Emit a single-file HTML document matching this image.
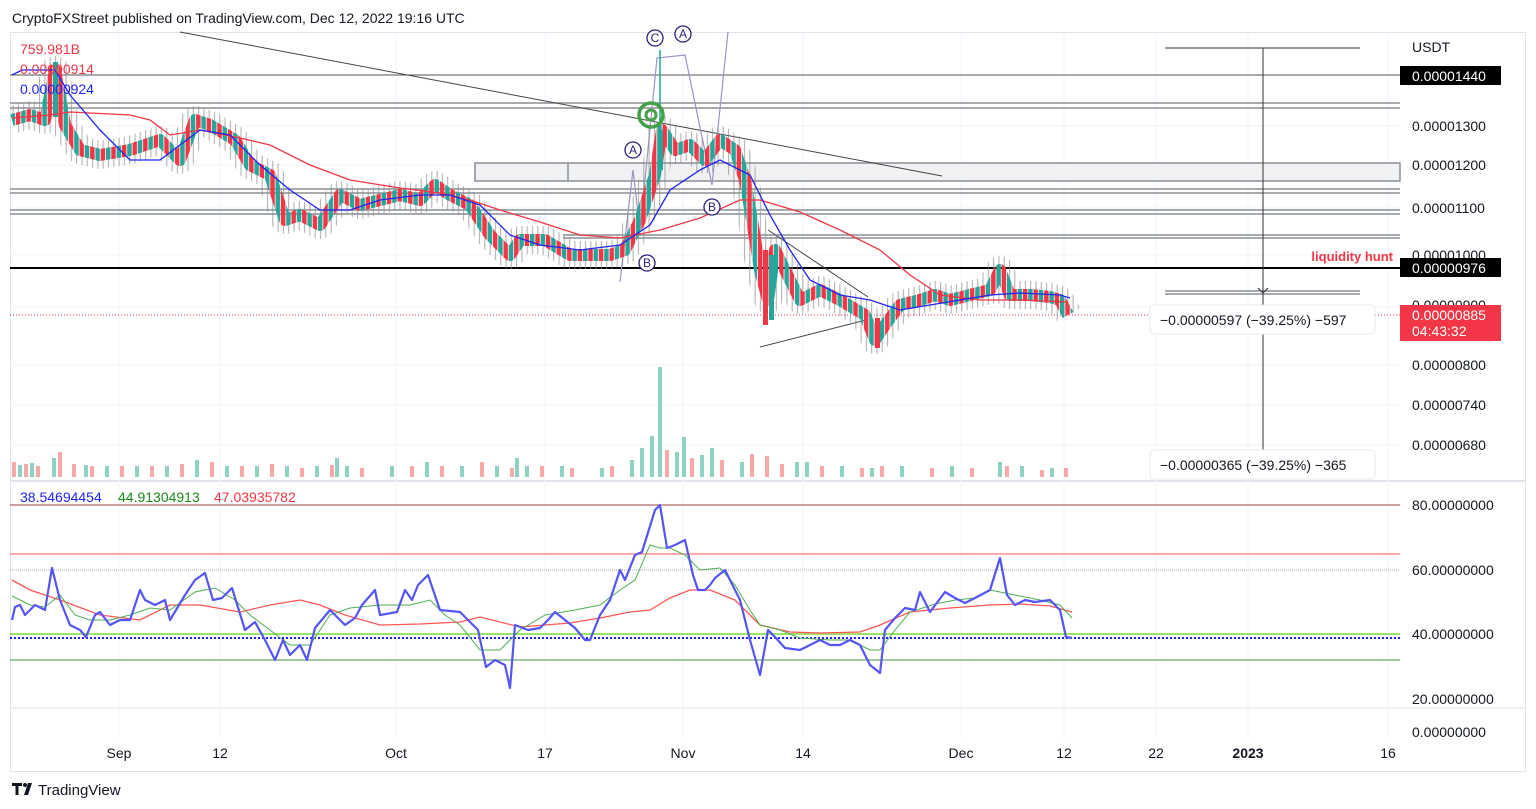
<!DOCTYPE html>
<html><head><meta charset="utf-8"><style>
html,body{margin:0;padding:0;background:#fff;width:1536px;height:809px;overflow:hidden;font-family:"Liberation Sans",sans-serif}
svg text{font-family:"Liberation Sans",sans-serif}
</style></head><body>
<svg width="1536" height="809" viewBox="0 0 1536 809" xmlns="http://www.w3.org/2000/svg">
<defs>
<pattern id="cd" x="0" y="0" width="10.6" height="40" patternUnits="userSpaceOnUse">
<rect x="0" y="0" width="4.5" height="40" fill="#26a69a"/>
<rect x="5.3" y="0" width="4.5" height="40" fill="#f23645"/>
</pattern>
<pattern id="wk" x="0" y="0" width="5.3" height="40" patternUnits="userSpaceOnUse">
<rect x="2" y="0" width="1" height="40" fill="#888"/>
</pattern>
</defs>
<rect width="1536" height="809" fill="#fff"/>
<text x="12" y="23" font-size="14" fill="#131722">CryptoFXStreet published on TradingView.com, Dec 12, 2022 19:16 UTC</text>
<rect x="10.5" y="32.5" width="1515" height="739" fill="none" stroke="#e0e3eb"/>
<line x1="10" y1="481" x2="1526" y2="481" stroke="#e0e3eb" stroke-width="2"/>
<line x1="10" y1="708" x2="1526" y2="708" stroke="#e0e3eb"/>
<g stroke="#f0f3fa" stroke-width="1">
<line x1="119" y1="33" x2="119" y2="738"/><line x1="220" y1="33" x2="220" y2="738"/><line x1="396" y1="33" x2="396" y2="738"/><line x1="545" y1="33" x2="545" y2="738"/><line x1="683" y1="33" x2="683" y2="738"/><line x1="803" y1="33" x2="803" y2="738"/><line x1="961" y1="33" x2="961" y2="738"/><line x1="1064" y1="33" x2="1064" y2="738"/><line x1="1156" y1="33" x2="1156" y2="738"/><line x1="1248" y1="33" x2="1248" y2="738"/><line x1="1388" y1="33" x2="1388" y2="738"/>
<line x1="10" y1="126" x2="1400" y2="126"/><line x1="10" y1="165" x2="1400" y2="165"/><line x1="10" y1="208" x2="1400" y2="208"/><line x1="10" y1="255" x2="1400" y2="255"/><line x1="10" y1="307" x2="1400" y2="307"/><line x1="10" y1="365" x2="1400" y2="365"/><line x1="10" y1="405" x2="1400" y2="405"/><line x1="10" y1="445" x2="1400" y2="445"/>
</g>
<rect x="475" y="163" width="925" height="18" fill="#f0f1f3" stroke="#8a8e94" stroke-width="1.5"/>
<line x1="568" y1="163" x2="568" y2="181" stroke="#8a8e94" stroke-width="1.5"/>
<g stroke="#8a8e94" stroke-width="1.5">
<line x1="10" y1="103" x2="1400" y2="103"/><line x1="10" y1="108" x2="1400" y2="108"/>
<line x1="10" y1="189" x2="1400" y2="189"/><line x1="10" y1="193" x2="1400" y2="193"/>
<line x1="10" y1="210" x2="1400" y2="210"/><line x1="10" y1="214" x2="1400" y2="214"/>
<line x1="563" y1="235" x2="1400" y2="235"/><line x1="563" y1="238" x2="1400" y2="238"/>
<line x1="1165" y1="291" x2="1360" y2="291"/><line x1="1165" y1="294" x2="1360" y2="294"/>
</g>
<line x1="10" y1="75" x2="1400" y2="75" stroke="#555" stroke-width="1"/>
<line x1="10" y1="268" x2="1400" y2="268" stroke="#000" stroke-width="2"/>
<line x1="10" y1="315" x2="1400" y2="315" stroke="#f23645" stroke-width="1" stroke-dasharray="1,2"/>
<line x1="180" y1="32" x2="942" y2="176" stroke="#444" stroke-width="1"/>
<line x1="768" y1="230" x2="868" y2="297" stroke="#444"/>
<line x1="760" y1="347" x2="866" y2="320" stroke="#444"/>
<line x1="1165" y1="48" x2="1360" y2="48" stroke="#333"/>
<line x1="1263" y1="48" x2="1263" y2="450" stroke="#333"/>
<path d="M1258 288l5 5 5-5" fill="none" stroke="#333"/>
<polyline points="620,282 633,170 640,230 657,58 685,55 712,185 728,32" fill="none" stroke="#9a94c8" stroke-width="1.2"/>
<g fill="#f7a9a9">
<path d="M12 462h4v15h-4zM24 464h4v13h-4zM36 466h4v11h-4zM58 452h4v25h-4zM72 464h4v13h-4zM90 466h4v11h-4zM120 466h4v11h-4zM150 466h4v11h-4zM180 464h4v13h-4zM210 462h4v15h-4zM240 466h4v11h-4zM270 464h4v13h-4zM300 468h4v9h-4zM330 465h4v12h-4zM360 468h4v9h-4zM410 466h4v11h-4zM440 466h4v11h-4zM480 462h4v15h-4zM510 468h4v9h-4zM540 466h4v11h-4zM570 468h4v9h-4zM610 466h4v11h-4zM665 450h4v27h-4zM690 458h4v19h-4zM720 460h4v17h-4zM750 454h4v23h-4zM765 456h4v21h-4zM780 464h4v13h-4zM820 466h4v11h-4zM860 468h4v9h-4zM880 466h4v11h-4zM930 468h4v9h-4zM970 468h4v9h-4zM1005 466h4v11h-4zM1040 470h4v7h-4zM1064 468h4v9h-4z"/>
</g>
<g fill="#8fd1c2">
<path d="M18 465h4v12h-4zM30 463h4v14h-4zM52 458h4v19h-4zM84 465h4v12h-4zM105 466h4v11h-4zM135 466h4v11h-4zM165 466h4v11h-4zM195 460h4v17h-4zM225 466h4v11h-4zM255 466h4v11h-4zM285 466h4v11h-4zM315 466h4v11h-4zM335 458h4v19h-4zM345 466h4v11h-4zM390 466h4v11h-4zM425 462h4v15h-4zM460 466h4v11h-4zM495 466h4v11h-4zM515 458h4v19h-4zM525 466h4v11h-4zM560 466h4v11h-4zM600 468h4v9h-4zM630 460h4v17h-4zM640 448h4v29h-4zM650 436h4v41h-4zM658 367h4v110h-4zM675 452h4v25h-4zM682 437h4v40h-4zM700 455h4v22h-4zM710 448h4v29h-4zM740 462h4v15h-4zM795 462h4v15h-4zM805 462h4v15h-4zM840 466h4v11h-4zM870 468h4v9h-4zM900 466h4v11h-4zM950 466h4v11h-4zM998 462h4v15h-4zM1020 466h4v11h-4zM1050 468h4v9h-4z"/>
</g>
<!-- price candles approximated -->
<g fill="none" stroke-linejoin="round">
<polyline points="12,120 30,115 45,120 55,70 65,125 80,150 100,155 130,150 160,140 180,160 195,120 210,125 235,140 250,165 270,175 285,220 300,215 320,225 340,195 360,205 380,200 400,195 420,200 435,185 450,195 470,205 490,235 510,255 520,240 545,240 570,255 590,255 610,255 625,250 640,220 655,175 662,130 675,150 690,145 705,160 720,140 735,150 745,180 752,220 760,270 768,300 775,250 790,280 800,300 820,290 840,300 865,315 875,340 885,325 900,305 920,300 935,295 950,300 970,295 990,290 1000,270 1010,295 1030,295 1050,297 1060,300 1068,315" stroke="url(#wk)" stroke-width="28" opacity="0.7"/>
<polyline points="12,120 30,115 45,120 55,70 65,125 80,150 100,155 130,150 160,140 180,160 195,120 210,125 235,140 250,165 270,175 285,220 300,215 320,225 340,195 360,205 380,200 400,195 420,200 435,185 450,195 470,205 490,235 510,255 520,240 545,240 570,255 590,255 610,255 625,250 640,220 655,175 662,130 675,150 690,145 705,160 720,140 735,150 745,180 752,220 760,270 768,300 775,250 790,280 800,300 820,290 840,300 865,315 875,340 885,325 900,305 920,300 935,295 950,300 970,295 990,290 1000,270 1010,295 1030,295 1050,297 1060,300 1068,315" stroke="url(#cd)" stroke-width="12"/>
</g>
<rect x="763" y="250" width="5" height="75" fill="#f23645"/>
<rect x="769" y="255" width="5" height="65" fill="#26a69a"/>
<rect x="658" y="130" width="5" height="40" fill="#26a69a"/>
<line x1="660" y1="50" x2="660" y2="135" stroke="#26a69a" stroke-width="1.5"/>
<rect x="53" y="62" width="5" height="55" fill="#26a69a"/>
<rect x="875" y="318" width="5" height="30" fill="#f23645"/>
<polyline points="12,118 50,115 70,112 130,115 150,120 170,135 200,130 240,138 270,145 310,165 350,180 400,188 440,193 470,200 500,210 540,222 580,235 620,238 660,230 700,218 740,200 760,200 800,212 840,230 880,250 910,275 940,295 980,300 1020,300 1068,302" fill="none" stroke="#f23645" stroke-width="1.3"/>
<polyline points="12,75 22,70 55,70 70,95 100,130 130,160 160,160 200,130 230,135 260,165 290,190 320,210 350,210 380,200 420,195 450,195 480,205 510,235 540,245 580,250 620,245 650,225 670,190 700,170 720,160 750,175 770,215 790,250 810,280 840,295 870,300 900,310 930,305 960,300 990,295 1020,293 1060,295 1070,298" fill="none" stroke="#2124f0" stroke-width="1.3"/>
<circle cx="651" cy="115" r="12" fill="none" stroke="#43a047" stroke-width="3.5"/><circle cx="651" cy="115" r="5" fill="none" stroke="#43a047" stroke-width="3"/>
<g font-size="12" fill="#2a1f7a" text-anchor="middle">
<circle cx="655" cy="38" r="8" fill="#fff" stroke="#2a1f7a" stroke-width="1.3"/><text x="655" y="42">C</text>
<circle cx="683" cy="34" r="8" fill="#fff" stroke="#2a1f7a" stroke-width="1.3"/><text x="683" y="38">A</text>
<circle cx="633" cy="150" r="8" fill="#fff" stroke="#2a1f7a" stroke-width="1.3"/><text x="633" y="154">A</text>
<circle cx="712" cy="207" r="8" fill="#fff" stroke="#2a1f7a" stroke-width="1.3"/><text x="712" y="211">B</text>
<circle cx="647" cy="263" r="8" fill="#fff" stroke="#2a1f7a" stroke-width="1.3"/><text x="647" y="267">B</text>
</g>
<text x="20" y="54" font-size="14" fill="#f23645">759.981B</text>
<text x="20" y="74" font-size="14" fill="#f23645">0.00000914</text>
<text x="20" y="94" font-size="14" fill="#2124f0">0.00000924</text>
<text x="1393" y="261" font-size="13" font-weight="bold" fill="#f23645" text-anchor="end">liquidity hunt</text>
<rect x="1150" y="305" width="225" height="29" rx="4" fill="#fff" stroke="#e8e8ec"/>
<text x="1160" y="325" font-size="14" fill="#131722">−0.00000597 (−39.25%) −597</text>
<rect x="1150" y="450" width="225" height="29" rx="4" fill="#fff" stroke="#e8e8ec"/>
<text x="1160" y="470" font-size="14" fill="#131722">−0.00000365 (−39.25%) −365</text>
<g font-size="14" fill="#131722">
<text x="1412" y="52">USDT</text>
<text x="1412" y="131">0.00001300</text>
<text x="1412" y="170">0.00001200</text>
<text x="1412" y="213">0.00001100</text>
<text x="1412" y="260">0.00001000</text>
<text x="1412" y="310">0.00000900</text>
<text x="1412" y="370">0.00000800</text>
<text x="1412" y="410">0.00000740</text>
<text x="1412" y="450">0.00000680</text>
</g>
<rect x="1400" y="66" width="101" height="19" fill="#000"/><text x="1412" y="81" font-size="14" fill="#fff">0.00001440</text>
<rect x="1400" y="258" width="101" height="19" fill="#000"/><text x="1412" y="273" font-size="14" fill="#fff">0.00000976</text>
<rect x="1400" y="305" width="101" height="36" fill="#f23645"/><text x="1412" y="320" font-size="14" fill="#fff">0.00000885</text><text x="1412" y="336" font-size="14" fill="#fff">04:43:32</text>
<text x="20" y="502" font-size="14" fill="#2124f0">38.54694454</text>
<text x="118" y="502" font-size="14" fill="#1b8a1b">44.91304913</text>
<text x="214" y="502" font-size="14" fill="#f23645">47.03935782</text>
<line x1="10" y1="505" x2="1400" y2="505" stroke="#a04040" stroke-width="1"/>
<line x1="10" y1="554" x2="1400" y2="554" stroke="#f77" stroke-width="1.2"/>
<line x1="10" y1="570" x2="1400" y2="570" stroke="#aaa" stroke-dasharray="1,1"/>
<line x1="10" y1="634" x2="1400" y2="634" stroke="#9be36b" stroke-width="2"/>
<line x1="10" y1="638" x2="1400" y2="638" stroke="#2124f0" stroke-width="2" stroke-dasharray="2,2"/>
<line x1="10" y1="660" x2="1400" y2="660" stroke="#3d9a3d" stroke-width="1"/>
<polyline points="12,580 30,590 60,600 100,615 140,620 170,605 200,605 240,612 270,605 300,600 320,605 345,615 380,625 420,624 460,622 480,617 520,627 570,623 600,618 630,612 650,610 670,598 690,590 710,590 735,600 760,625 790,632 820,633 860,632 880,625 910,612 950,608 990,605 1020,604 1050,606 1072,612" fill="none" stroke="#f55" stroke-width="1.3"/>
<polyline points="12,596 30,605 45,607 60,595 75,615 90,620 110,620 130,615 150,608 170,610 195,592 215,588 235,600 250,615 270,630 290,645 310,645 330,615 350,608 380,605 410,605 430,600 445,615 460,625 480,650 500,650 520,630 545,615 575,610 600,605 620,590 635,580 650,545 660,548 670,548 685,555 700,570 720,568 735,585 750,610 760,625 780,630 800,638 830,640 850,640 870,650 880,650 895,630 910,612 935,604 955,600 975,598 990,590 1010,594 1040,600 1060,605 1072,618" fill="none" stroke="#4caf50" stroke-width="1"/>
<polyline points="12,620 15,607 20,605 25,615 35,605 45,610 52,568 60,600 70,625 80,630 86,637 95,615 100,612 110,625 120,620 130,620 140,590 145,600 155,605 165,600 170,620 185,595 195,580 205,573 213,600 222,598 232,588 245,630 255,622 265,640 275,660 283,640 290,655 300,645 307,660 315,628 330,610 345,625 355,618 362,605 375,590 380,615 397,612 405,590 412,600 418,585 428,575 440,610 460,612 478,630 486,667 495,660 505,665 510,688 515,625 528,630 540,628 548,620 555,612 565,620 575,628 585,640 590,640 600,615 610,600 620,570 625,580 635,555 642,552 655,510 660,505 667,548 675,545 685,540 693,575 698,590 705,590 710,585 715,578 725,570 740,600 750,640 760,675 768,630 775,637 785,648 800,650 810,645 820,640 830,645 840,645 850,640 860,645 870,665 880,673 885,630 895,618 905,608 915,610 920,592 930,612 945,592 955,598 965,603 975,598 990,590 1000,558 1007,595 1015,605 1025,600 1035,602 1050,600 1060,610 1066,637 1072,638" fill="none" stroke="#5555f5" stroke-width="2.2" stroke-linejoin="round"/>
<g font-size="14" fill="#131722">
<text x="1412" y="510">80.00000000</text>
<text x="1412" y="575">60.00000000</text>
<text x="1412" y="639">40.00000000</text>
<text x="1412" y="704">20.00000000</text>
<text x="1412" y="737">0.00000000</text>
</g>
<g font-size="14" fill="#131722" text-anchor="middle">
<text x="119" y="758">Sep</text><text x="220" y="758">12</text><text x="396" y="758">Oct</text><text x="545" y="758">17</text><text x="683" y="758">Nov</text><text x="803" y="758">14</text><text x="961" y="758">Dec</text><text x="1064" y="758">12</text><text x="1156" y="758">22</text><text x="1248" y="758" font-weight="bold">2023</text><text x="1388" y="758">16</text>
</g>
<g fill="#131722"><path d="M12 783h10v3h-3.5v9h-3v-9h-3.5z"/><circle cx="25" cy="785" r="2"/><path d="M28 783h4l-4 12h-4z"/></g>
<text x="38" y="795" font-size="15" fill="#131722">TradingView</text>
</svg>
</body></html>
